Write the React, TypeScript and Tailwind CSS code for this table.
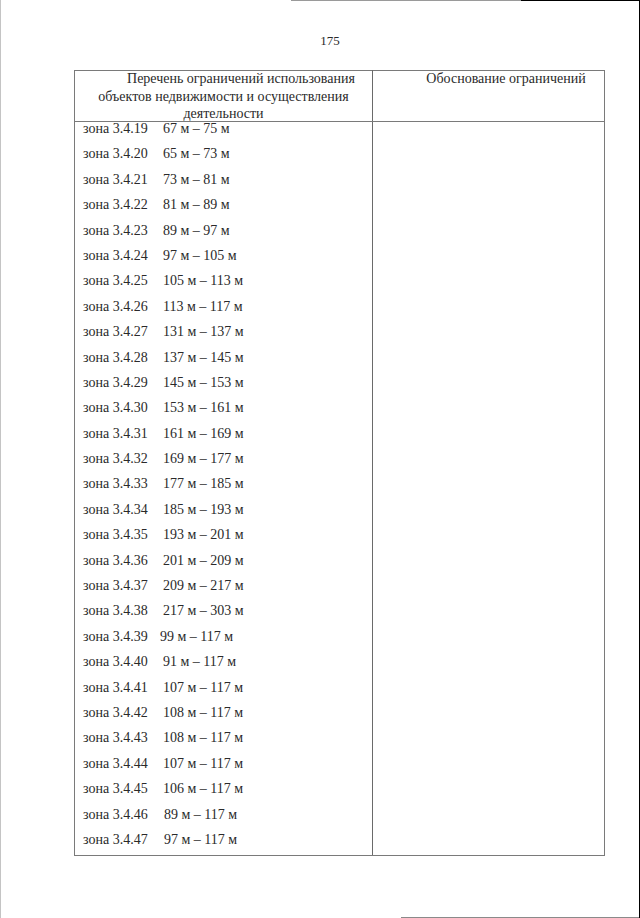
import React from "react";

const rows: [string, string, number][] = [
  ["3.4.19", "67 м – 75 м", 80],
  ["3.4.20", "65 м – 73 м", 80],
  ["3.4.21", "73 м – 81 м", 80],
  ["3.4.22", "81 м – 89 м", 80],
  ["3.4.23", "89 м – 97 м", 80],
  ["3.4.24", "97 м – 105 м", 80],
  ["3.4.25", "105 м – 113 м", 80],
  ["3.4.26", "113 м – 117 м", 80],
  ["3.4.27", "131 м – 137 м", 80],
  ["3.4.28", "137 м – 145 м", 80],
  ["3.4.29", "145 м – 153 м", 80],
  ["3.4.30", "153 м – 161 м", 80],
  ["3.4.31", "161 м – 169 м", 80],
  ["3.4.32", "169 м – 177 м", 80],
  ["3.4.33", "177 м – 185 м", 80],
  ["3.4.34", "185 м – 193 м", 80],
  ["3.4.35", "193 м – 201 м", 80],
  ["3.4.36", "201 м – 209 м", 80],
  ["3.4.37", "209 м – 217 м", 80],
  ["3.4.38", "217 м – 303 м", 80],
  ["3.4.39", "99 м – 117 м", 77],
  ["3.4.40", "91 м – 117 м", 80],
  ["3.4.41", "107 м – 117 м", 80],
  ["3.4.42", "108 м – 117 м", 80],
  ["3.4.43", "108 м – 117 м", 80],
  ["3.4.44", "107 м – 117 м", 80],
  ["3.4.45", "106 м – 117 м", 80],
  ["3.4.46", "89 м – 117 м", 81],
  ["3.4.47", "97 м – 117 м", 81],
];

export default function App() {
  return (
    <div className="relative w-[640px] h-[918px] bg-white border-l border-l-[#c4c4c4] border-r border-r-black font-['Liberation_Serif',serif] text-[#2a2a2a]">
      <div className="absolute left-[290px] right-0 top-0 h-px bg-[#9a9a9a]" />
      <div className="absolute left-[520px] right-0 top-0 h-px bg-black" />
      <div className="absolute left-[400px] right-0 bottom-0 h-px bg-[#8a8a8a]" />
      <div className="pt-[33px] pl-[20px] text-center text-[13px] leading-[16px]">175</div>
      <div className="mt-[21px] ml-[73px] w-[531px] border border-[#7a7a7a] text-[14px]">
        <div className="grid grid-cols-[298px_231px] border-b border-[#7a7a7a]">
          <div className="h-[51px] border-r border-[#6a6a6a] px-[5px] -mt-[1px] text-center indent-[35px] leading-[17.5px]">
            Перечень ограничений использования объектов недвижимости и осуществления деятельности
          </div>
          <div className="h-[51px] px-[5px] -mt-[1px] text-center indent-[35px] leading-[17.5px]">
            Обоснование ограничений
          </div>
        </div>
        <div className="grid grid-cols-[298px_231px]">
          <div className="flex flex-col gap-y-[11.4px] pb-[8px] pl-[8px] border-r border-[#6a6a6a] leading-[14px]">
            {rows.map(([z, r, w]) => (
              <div key={z} className="flex whitespace-nowrap">
                <span style={{ width: w }}>зона {z}</span>
                <span>{r}</span>
              </div>
            ))}
          </div>
          <div />
        </div>
      </div>
    </div>
  );
}
